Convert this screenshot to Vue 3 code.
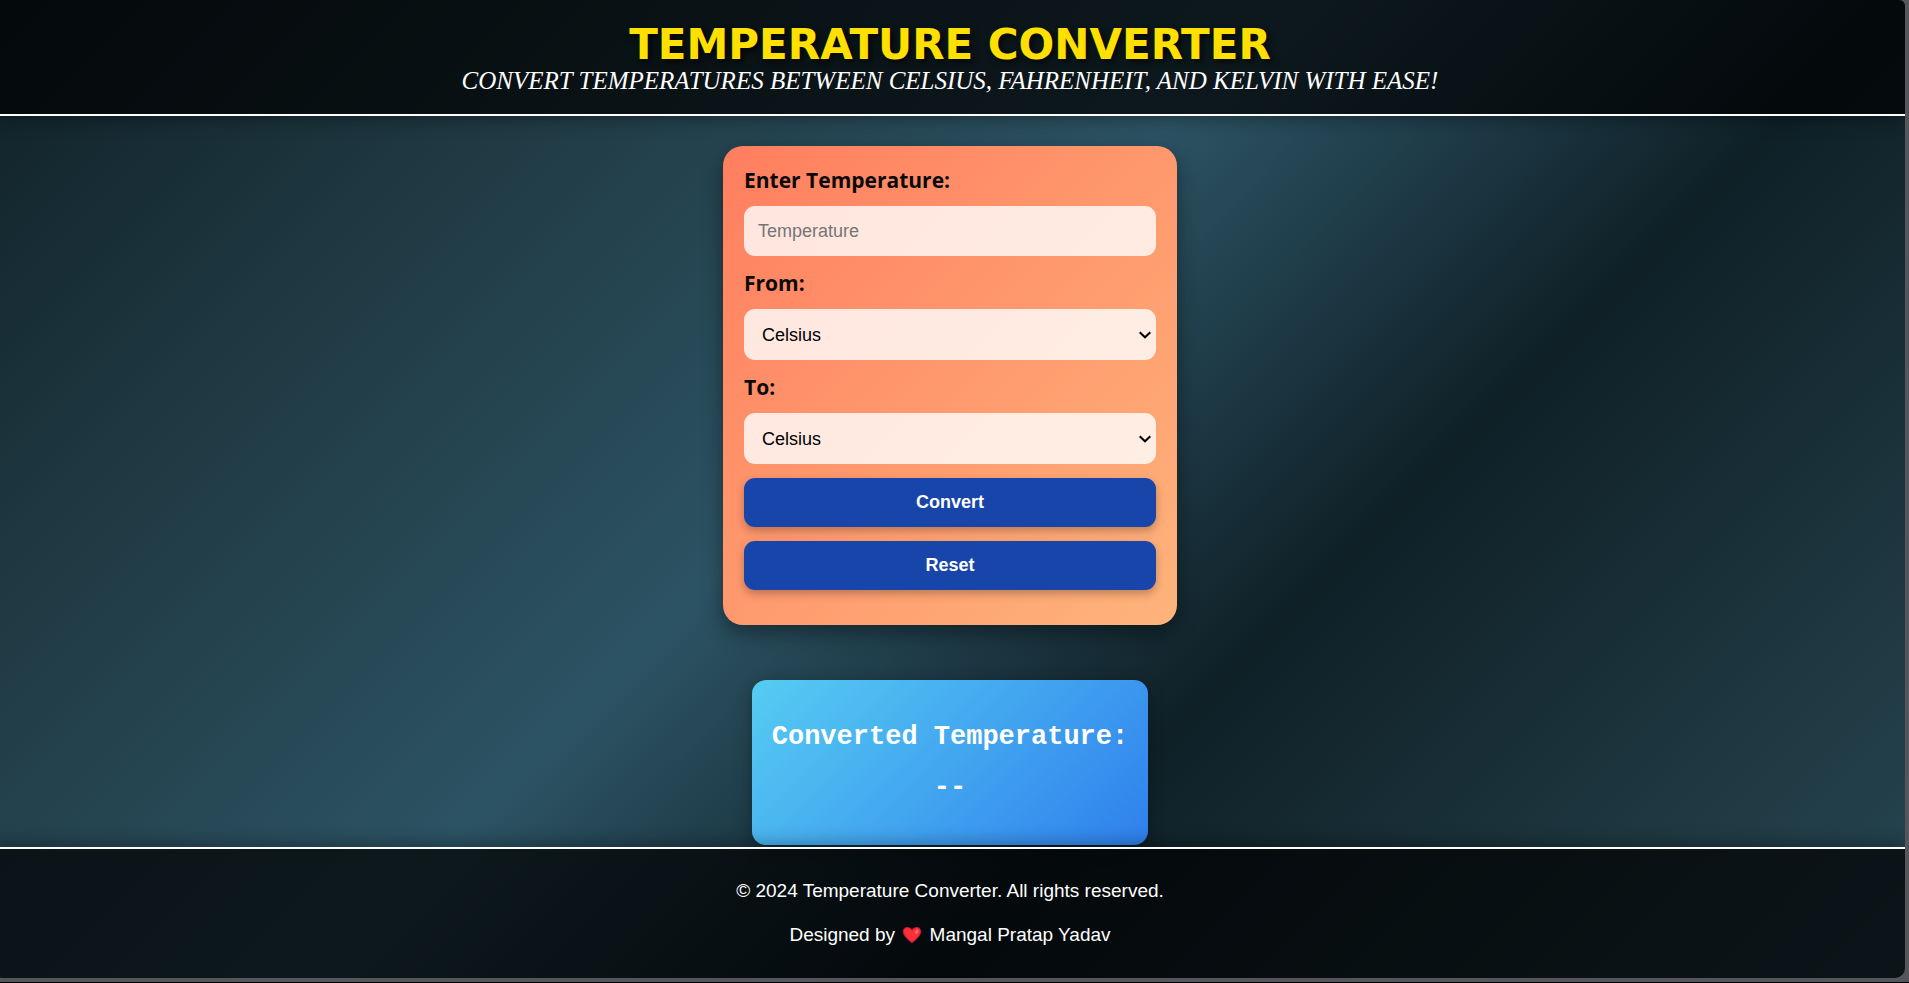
<script setup>
import { ref } from 'vue'

const units = ['Celsius', 'Fahrenheit', 'Kelvin']
const value = ref('')
const from = ref('Celsius')
const to = ref('Celsius')
const result = ref('--')

function convert() {
  const n = parseFloat(value.value)
  if (Number.isNaN(n)) {
    result.value = '--'
    return
  }
  let c = n
  if (from.value === 'Fahrenheit') c = ((n - 32) * 5) / 9
  if (from.value === 'Kelvin') c = n - 273.15
  let out = c
  if (to.value === 'Fahrenheit') out = (c * 9) / 5 + 32
  if (to.value === 'Kelvin') out = c + 273.15
  result.value = out.toFixed(2)
}

function reset() {
  value.value = ''
  from.value = 'Celsius'
  to.value = 'Celsius'
  result.value = '--'
}
</script>

<template>
  <div class="page">
    <header class="top">
      <h1>TEMPERATURE CONVERTER</h1>
      <p>CONVERT TEMPERATURES BETWEEN CELSIUS, FAHRENHEIT, AND KELVIN WITH EASE!</p>
    </header>

    <main>
      <form class="card" @submit.prevent="convert">
        <label for="temperature">Enter Temperature:</label>
        <input id="temperature" v-model="value" type="text" placeholder="Temperature" />
        <label for="from">From:</label>
        <div class="pick">
          <select id="from" v-model="from">
            <option v-for="u in units" :key="u">{{ u }}</option>
          </select>
          <svg viewBox="0 0 12 8" aria-hidden="true"><path d="M.7 1.200 6 6.300 11.300 1.200" /></svg>
        </div>
        <label for="to">To:</label>
        <div class="pick">
          <select id="to" v-model="to">
            <option v-for="u in units" :key="u">{{ u }}</option>
          </select>
          <svg viewBox="0 0 12 8" aria-hidden="true"><path d="M.7 1.200 6 6.300 11.300 1.200" /></svg>
        </div>
        <button type="submit">Convert</button>
        <button type="button" @click="reset">Reset</button>
      </form>

      <section class="result">
        <h2>Converted Temperature:</h2>
        <p>{{ result }}</p>
      </section>
    </main>

    <footer class="bottom">
      <p>© 2024 Temperature Converter. All rights reserved.</p>
      <p>
        Designed by
        <svg class="heart" viewBox="0 0 20 18" aria-hidden="true">
          <path d="M10 17.6C7 14.6 .8 10.6 .8 5.6.8 2.8 2.8.9 5.4.9c1.900 0 3.600 1 4.600 2.700C11 1.900 12.700.9 14.600.9c2.600 0 4.600 1.900 4.600 4.700 0 5-6.200 9-9.200 12z" fill="#c5183f" />
          <path d="M10 15.900C7.600 13.400 2.500 10 1.900 5.900 1.800 3.500 3.300 1.900 5.500 1.900c2 0 3.600 1.300 4.500 3.200.9-1.900 2.500-3.200 4.500-3.200 2.200 0 3.800 1.600 3.700 4-.6 4.100-5.800 7.500-8.200 10z" fill="#fb2f38" />
          <ellipse cx="14.800" cy="5.600" rx="1.500" ry="2.400" transform="rotate(28 14.800 5.600)" fill="#ff6a68" />
        </svg>
        Mangal Pratap Yadav
      </p>
    </footer>
  </div>
</template>

<style>
html {
  background: #000;
}
body {
  margin: 0;
}
#app {
  background: #55565b;
  overflow: hidden;
  margin-bottom: 1px;
}
</style>

<style scoped>
* {
  box-sizing: border-box;
}
.page {
  display: flex;
  flex-direction: column;
  min-height: calc(100vh - 5px);
  margin: 0 4px 4px -5px;
  border-radius: 0 6px 10px 8px;
  overflow: hidden;
  color: #fff;
  font-family: "Liberation Sans", Arial, sans-serif;
  background: linear-gradient(135deg, #0f2027 0%, #203a43 22%, #2c5364 45%, #0f2027 66%, #203a43 88%, #264753 100%);
}
h1,
h2,
p {
  margin: 0;
}
.top {
  position: relative;
  height: 116px;
  padding-top: 22px;
  border-bottom: 2px solid #fff;
  background: rgba(0, 0, 0, 0.7);
  box-shadow: 0 4px 16px rgba(0, 0, 0, 0.3);
  text-align: center;
}
.top h1 {
  font: bold 42px/46px Verdana, "DejaVu Sans", sans-serif;
  color: #ffe000;
  text-shadow: 3px 3px 6px rgba(0, 0, 0, 0.7);
}
.top p {
  font: italic 25px/26px Georgia, "Liberation Serif", serif;
}
main {
  flex: 1;
  display: flex;
  flex-direction: column;
  align-items: center;
  gap: 55px;
  padding: 30px 0 2px;
}
.card {
  display: flex;
  flex-direction: column;
  gap: 14px;
  width: 454px;
  padding: 21px 21px 35px;
  border-radius: 20px;
  background: linear-gradient(135deg, #ff7e5f, #feb47b);
  box-shadow: 0 8px 20px rgba(0, 0, 0, 0.4);
}
.card label {
  padding-top: 1px;
  font: bold 21px/24px "Trebuchet MS", "Open Sans", sans-serif;
  color: #0a0a0a;
}
.card input,
.card select {
  width: 100%;
  height: 50px;
  padding: 14px;
  border: none;
  border-radius: 11px;
  background: rgba(255, 255, 255, 0.8);
  color: #000;
  font: 18px/22px "Liberation Sans", Arial, sans-serif;
}
.card select {
  display: block;
  height: 51px;
  padding: 14px 18px;
  appearance: none;
}
.pick {
  position: relative;
}
.pick svg {
  position: absolute;
  right: 5px;
  top: 22px;
  width: 12px;
  height: 8px;
  fill: none;
  stroke: #000;
  stroke-width: 2;
  pointer-events: none;
}
.card input::placeholder {
  color: #757575;
}
.card button {
  height: 49px;
  padding: 0 0 2px;
  border: none;
  border-radius: 11px;
  background: #1845a9;
  color: #fff;
  font: bold 18px/22px "Liberation Sans", Arial, sans-serif;
  box-shadow: 0 4px 8px rgba(0, 0, 0, 0.25);
}
.result {
  padding: 41px 20px;
  border-radius: 14px;
  background: linear-gradient(135deg, #56ccf2, #2f80ed);
  box-shadow: 0 4px 16px rgba(0, 0, 0, 0.3);
  font: bold 27px/32px "Courier New", "Liberation Mono", monospace;
  text-align: center;
}
.result h2 {
  margin-bottom: 19px;
  font: inherit;
}
.bottom {
  position: relative;
  display: flex;
  flex-direction: column;
  gap: 22px;
  height: 131px;
  padding-top: 31px;
  border-top: 2px solid #fff;
  background: rgba(0, 0, 0, 0.7);
  box-shadow: 0 -4px 16px rgba(0, 0, 0, 0.3);
  font-size: 19px;
  line-height: 22px;
  text-align: center;
}
.heart {
  width: 20px;
  height: 18px;
  margin: 0 2px;
  vertical-align: -3px;
}
</style>
